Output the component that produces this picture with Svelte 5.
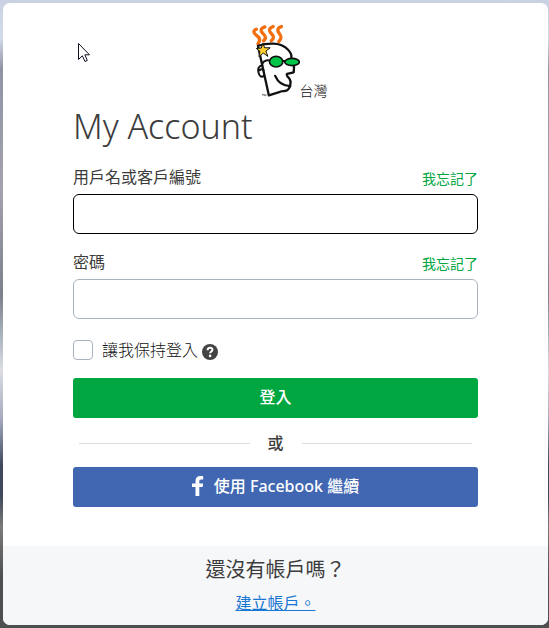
<script>
	let username = $state('');
	let password = $state('');
	let keepSignedIn = $state(false);

	function submit(event) {
		event.preventDefault();
	}
</script>

<svelte:head>
	<title>My Account</title>
</svelte:head>

<div class="page">
	<main class="card">
		<form class="content" onsubmit={submit}>
			<div class="brand">
				<svg class="logo" viewBox="33 27 145 219" role="img" aria-label="GoDaddy">
					<g fill="none" stroke="#f26f10" stroke-width="10" stroke-linecap="round">
						<path d="M46 42C35 47 38 54 46 60C60 70 57 79 51 86" />
						<path d="M72 35C58 40 58 46 65 54C73 62 78 68 68 77" />
						<path d="M97 34C82 40 84 47 91 55C99 63 101 69 91 77" />
						<path d="M122 34C108 39 109 46 115 54C122 63 124 69 114 79" />
					</g>
					<g fill="none" stroke="#111" stroke-width="7" stroke-linecap="round" stroke-linejoin="round">
						<path
							fill="#fff"
							d="M51 92C83 82 116 83 134 97C149 109 154 119 152 128C156 140 160 147 160 155L159 172L139 177C136 180 140 184 142 187C149 193 151 203 148 214C142 234 127 226 115 232L84 242Z"
						/>
						<path d="M103 183C111 202 126 213 148 214" />
						<path
							stroke-width="6"
							d="M64 151C52 153 49 164 53 174C55 184 62 188 69 183M56 166C61 161 65 163 68 166M65 145C69 135 82 134 90 138M121 138L134 138"
						/>
					</g>
					<path
						d="M66 84L71 98L88 98L75 108L81 124L67 114L54 125L57 109L46 100L61 99Z"
						fill="#fdd02c"
						stroke="#111"
						stroke-width="3"
					/>
					<g fill="#00c546" stroke="#111" stroke-width="5">
						<ellipse cx="106" cy="140" rx="20" ry="16" />
						<ellipse cx="154" cy="141" rx="22" ry="11" />
					</g>
					<path d="M63 239h6m-3 0v5m5 0v-5l2 3l2-3v5" fill="none" stroke="#555" stroke-width="2" />
				</svg>
				<span class="region">台灣</span>
			</div>

			<h1>My Account</h1>

			<div class="field">
				<div class="field-header">
					<label for="username">用戶名或客戶編號</label>
					<a href="#forgot-username">我忘記了</a>
				</div>
				<input id="username" class="text-input active" type="text" bind:value={username} />
			</div>

			<div class="field">
				<div class="field-header">
					<label for="password">密碼</label>
					<a href="#forgot-password">我忘記了</a>
				</div>
				<input id="password" class="text-input" type="password" bind:value={password} />
			</div>

			<div class="remember">
				<input id="remember" type="checkbox" bind:checked={keepSignedIn} />
				<label for="remember">讓我保持登入</label>
				<button class="help" type="button" aria-label="說明">
					<svg viewBox="0 0 16 16">
						<circle cx="8" cy="8" r="8" fill="#444" />
						<path d="M5.6 6.2C5.8 3 10.6 3.1 10.4 6C10.3 7.5 8.2 7.6 8.2 9.3" fill="none" stroke="#fff" stroke-width="2" />
						<circle cx="8.1" cy="11.9" r="1.3" fill="#fff" />
					</svg>
				</button>
			</div>

			<button class="button sign-in" type="submit">登入</button>

			<div class="divider"><span>或</span></div>

			<button class="button facebook" type="button">
				<svg viewBox="0 0 12 20">
					<path d="M3.5 20V11H0V7.4H3.5V5C3.5 1.7 5.4 0 8.3 0C9.6 0 10.8 0.1 11.2 0.2V3.4H9.2C7.6 3.4 7.3 4.2 7.3 5.3V7.4H11.1L10.6 11H7.3V20Z" fill="#fff" />
				</svg>
				<span>使用 Facebook 繼續</span>
			</button>
		</form>

		<footer>
			<h2>還沒有帳戶嗎？</h2>
			<a href="#create">建立帳戶。</a>
		</footer>
	</main>

	<svg class="cursor" viewBox="0 0 12 20" aria-hidden="true">
		<path d="M0.5 0.5V16.5L4.3 12.8L7 18.5L9.3 17.4L6.8 11.8H11.5Z" fill="#fff" stroke="#112" />
	</svg>
</div>

<style>
	:global(body) {
		margin: 0;
		background: #4e4f50;
	}

	.page {
		position: relative;
		display: flex;
		box-sizing: border-box;
		min-height: 100vh;
		padding: 3px 1px 3px 3px;
		background: linear-gradient(
			#c9d1e3 0,
			#d3daea 6%,
			#8f94a3 11%,
			#a3a2ae 30%,
			#7c808c 47%,
			#a6b0bb 53%,
			#dcdde3 59%,
			#a2a7bb 67%,
			#3f4a5e 74%,
			#3f4a5e 79%,
			#7c7a79 84%,
			#4e4f50 92%
		);
		color: #3c3c3c;
		font-family: 'Open Sans', 'Noto Sans CJK TC', sans-serif;
		font-size: 16px;
		line-height: 24px;
	}

	.card {
		display: flex;
		flex: 1;
		flex-direction: column;
		overflow: hidden;
		border-radius: 7px;
		background: #fff;
	}

	.content {
		flex: 1;
		padding: 21px 70px 39px;
	}

	.brand {
		display: grid;
		grid-template-columns: 1fr 48px 1fr;
		align-items: end;
	}

	.logo {
		grid-column: 2;
		width: 48px;
		height: 73px;
	}

	.region {
		color: #111;
		font-size: 14px;
		font-weight: 300;
		line-height: 12px;
	}

	h1 {
		margin: 7px 0 14px;
		font-family: 'Noto Sans', sans-serif;
		font-size: 34px;
		font-weight: 300;
		line-height: 44px;
	}

	.field {
		margin-bottom: 13px;
	}

	.field-header {
		display: flex;
		align-items: center;
		justify-content: space-between;
		height: 30px;
		padding-bottom: 2px;
	}

	.field-header a {
		padding-top: 4px;
		color: #00a63f;
		font-size: 14px;
		text-decoration: none;
	}

	.text-input {
		display: block;
		box-sizing: border-box;
		width: 100%;
		height: 40px;
		padding: 0 12px;
		border: 1px solid #a9b4c0;
		border-radius: 6px;
		outline: none;
		background: #fff;
		font: inherit;
	}

	.text-input.active {
		border-color: #000;
	}

	.remember {
		display: flex;
		align-items: center;
		margin: 19px 0 16px;
		color: #111;
		font-weight: 300;
	}

	.remember input {
		width: 20px;
		height: 20px;
		margin: 0 9px 0 0;
		border: 1px solid #a9b4c0;
		border-radius: 4px;
		appearance: none;
		background: #fff;
	}

	.remember input:checked {
		background: #00a63f;
	}

	.help {
		width: 16px;
		height: 16px;
		margin: 4px 0 0 4px;
		padding: 0;
		border: 0;
		background: none;
		cursor: pointer;
	}

	.help svg {
		display: block;
	}

	.button {
		display: flex;
		align-items: center;
		justify-content: center;
		width: 100%;
		height: 40px;
		padding: 0 0 2px;
		border: 0;
		border-radius: 3px;
		color: #fff;
		font-family: 'Noto Sans', 'Noto Sans CJK TC', sans-serif;
		font-size: 16px;
		font-weight: 500;
		line-height: 24px;
		cursor: pointer;
	}

	.sign-in {
		background: #00a63f;
	}

	.divider {
		display: flex;
		align-items: center;
		gap: 18px;
		margin: 13px 6px 12px;
		font-weight: 500;
	}

	.divider::before,
	.divider::after {
		flex: 1;
		height: 1px;
		background: #ddd;
		content: '';
	}

	.facebook {
		gap: 10px;
		background: #4267b2;
	}

	.facebook svg {
		width: 12px;
		height: 20px;
	}

	footer {
		padding: 9px 0 10px;
		background: #f5f7f8;
		text-align: center;
	}

	h2 {
		margin: 0 0 6px;
		font-size: 20px;
		font-weight: 400;
		line-height: 30px;
	}

	footer a {
		color: #1976d2;
	}

	.cursor {
		position: absolute;
		top: 43px;
		left: 78px;
		width: 12px;
		height: 20px;
	}
</style>
